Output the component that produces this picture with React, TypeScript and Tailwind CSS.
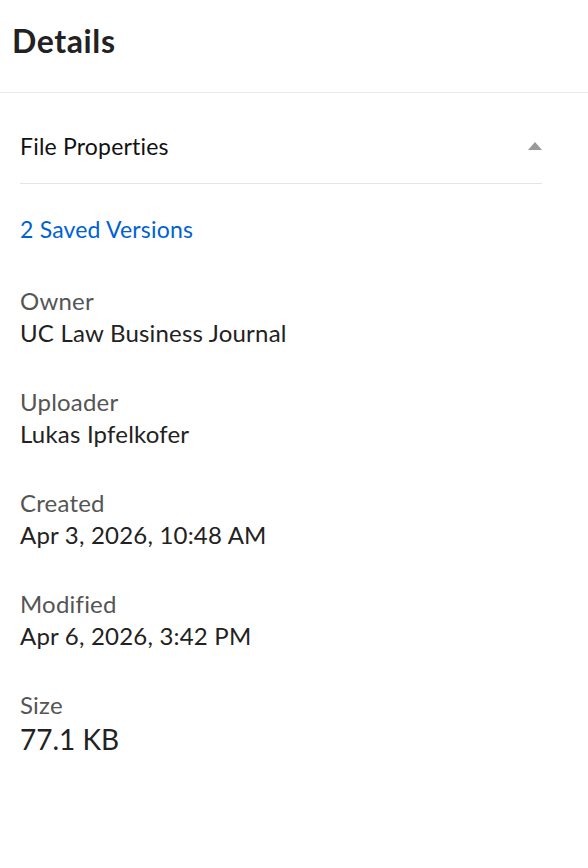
import React from 'react';

type Prop = { label: string; value: string; big?: boolean };

const props: Prop[] = [
  { label: 'Owner', value: 'UC Law Business Journal' },
  { label: 'Uploader', value: 'Lukas Ipfelkofer' },
  { label: 'Created', value: 'Apr 3, 2026, 10:48 AM' },
  { label: 'Modified', value: 'Apr 6, 2026, 3:42 PM' },
  { label: 'Size', value: '77.1 KB', big: true },
];

const App: React.FC = () => {
  return (
    <div className="w-[588px] h-[868px] bg-white text-[#222] font-['Lato','Liberation_Sans',sans-serif] [font-variant-ligatures:none]">
      <header className="h-[93px] border-b border-[#e8e8e8] px-3 pt-[21px]">
        <h1 className="text-[32px] leading-[40px] font-bold text-[#222] tracking-[0.6px]">Details</h1>
      </header>

      <section className="pl-5 pr-[46px]">
        <div className="h-[91px] pt-[16px] border-b border-[#e4e4e4] flex items-center justify-between">
          <span className="text-[23px] text-[#111] tracking-[0.2px]">File Properties</span>
          <svg width="14" height="8" viewBox="0 0 14 8">
            <path d="M7 0 L14 8 L0 8 Z" fill="#999" />
          </svg>
        </div>

        <a className="block mt-[29px] text-[23px] leading-[32px] text-[#0061d5] tracking-[0.2px]">2 Saved Versions</a>

        <dl className="mt-[40px] flex flex-col gap-[37px]">
          {props.map((p) => (
            <div key={p.label}>
              <dt className="text-[24px] leading-[32px] text-[#555] tracking-[0.2px]">{p.label}</dt>
              <dd
                className={
                  p.big
                    ? 'text-[28px] leading-[36px] text-[#222]'
                    : 'text-[24px] leading-[32px] text-[#222] tracking-[0.2px]'
                }
              >
                {p.value}
              </dd>
            </div>
          ))}
        </dl>
      </section>
    </div>
  );
};

export default App;
